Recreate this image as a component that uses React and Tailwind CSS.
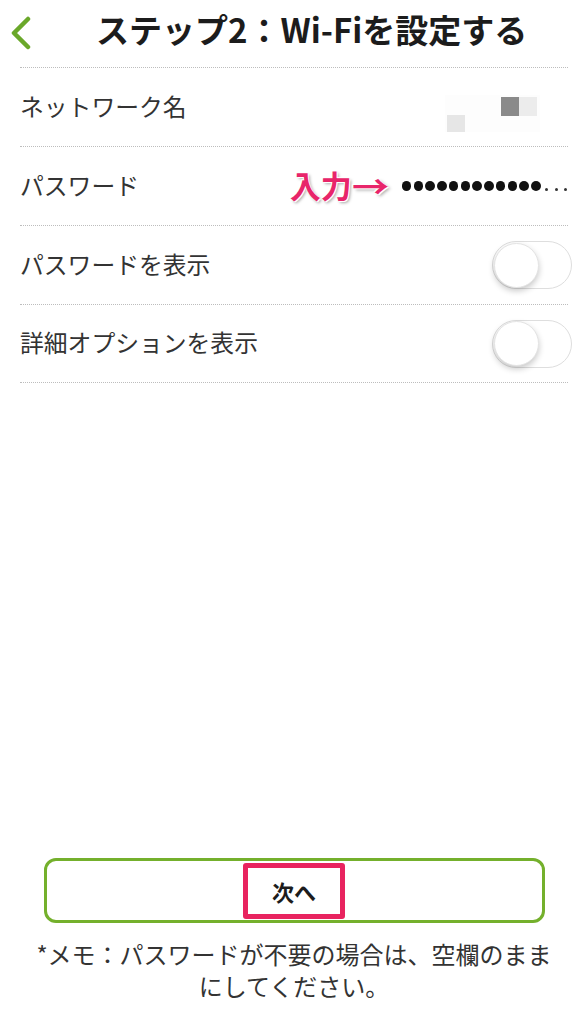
import React from "react";

const font = { fontFamily: '"Noto Sans CJK JP", "Noto Sans", sans-serif' };

function Toggle() {
  return (
    <div className="relative h-[48px] w-[80px] rounded-full border-[1.5px] border-[#dedede] bg-white -mr-[4px]">
      <div className="absolute left-[1px] top-[0.5px] h-[45px] w-[45px] rounded-full bg-white border border-[#e4e4e4] shadow-[0_3px_6px_rgba(0,0,0,0.22)]" />
    </div>
  );
}

function Row({ label, children, last }) {
  return (
    <div
      className={
        "flex h-[79px] items-center justify-between border-t border-dotted border-[#bdbdbd] " +
        (last ? "border-b" : "")
      }
    >
      <span className="-mt-[3px] text-[23.8px] text-[#333333] leading-none">{label}</span>
      {children}
    </div>
  );
}

const pinkShadow = {
  textShadow: "0 0 2px #fff, 1px 1px 0 #fff, -1px -1px 0 #fff, 2px 2px 3px rgba(0,0,0,0.35)",
};

export default function App() {
  return (
    <div className="flex h-[1024px] w-[588px] flex-col bg-white" style={font}>
      {/* Header */}
      <div className="relative flex h-[67px] items-center">
        <svg className="absolute left-[8px] top-[16px]" width="26" height="34" viewBox="0 0 26 34">
          <path d="M20 3 L6 17 L20 31" fill="none" stroke="#6aa82a" strokeWidth="4.5" strokeLinecap="round" strokeLinejoin="round" />
        </svg>
        <h1 className="-mt-[8px] ml-[96px] text-[33px] font-bold leading-none text-[#1c1c1c]">
          ステップ2：Wi-Fiを設定する
        </h1>
      </div>

      {/* List */}
      <div className="mx-[20px]">
        <Row label="ネットワーク名">
          <svg className="mr-[28px] mt-[8px]" width="95" height="41" viewBox="0 0 95 41">
            <rect x="0" y="4" width="95" height="37" fill="#fdfdfd" />
            <rect x="56" y="6" width="18" height="19" fill="#8a8a8a" />
            <rect x="74" y="6" width="18" height="19" fill="#ececec" />
            <rect x="2" y="24" width="18" height="17" fill="#e6e6e6" />
          </svg>
        </Row>
        <Row label="パスワード">
          <div className="flex items-center mr-[1px]">
            <span className="-mt-[4px] flex items-center text-[31px] font-bold leading-none text-[#e8256a]" style={pinkShadow}>
              入力
              <span className="inline-block w-[35px] origin-left scale-x-[1.2]">→</span>
            </span>
            <div className="ml-[15px] flex items-center gap-[2.25px]">
              {Array.from({ length: 12 }).map((_, i) => (
                <div key={i} className="h-[9.5px] w-[9.5px] shrink-0 rounded-full bg-[#111]" />
              ))}
            </div>
            <div className="ml-[4.5px] mt-[6px] flex items-center gap-[6.5px]">
              <div className="h-[3px] w-[3px] rounded-full bg-[#333]" />
              <div className="h-[3px] w-[3px] rounded-full bg-[#333]" />
              <div className="h-[3px] w-[3px] rounded-full bg-[#333]" />
            </div>
          </div>
        </Row>
        <Row label="パスワードを表示">
          <Toggle />
        </Row>
        <Row label="詳細オプションを表示" last>
          <Toggle />
        </Row>
      </div>

      {/* Footer */}
      <div className="mt-auto mb-[22px] flex flex-col items-center">
        <div className="flex h-[65px] w-[501px] items-center justify-center rounded-[12px] border-[3px] border-[#74b02c] bg-white">
          <div className="flex h-[56px] w-[102px] items-center justify-center rounded-[3px] border-[5px] border-[#e8235f]">
            <span className="text-[22px] font-bold leading-none text-[#1c1c1c]">次へ</span>
          </div>
        </div>
        <p className="mt-[15px] text-center text-[24px] leading-[32px] text-[#333333]">
          *メモ：パスワードが不要の場合は、空欄のまま
          <br />
          にしてください。
        </p>
      </div>
    </div>
  );
}
